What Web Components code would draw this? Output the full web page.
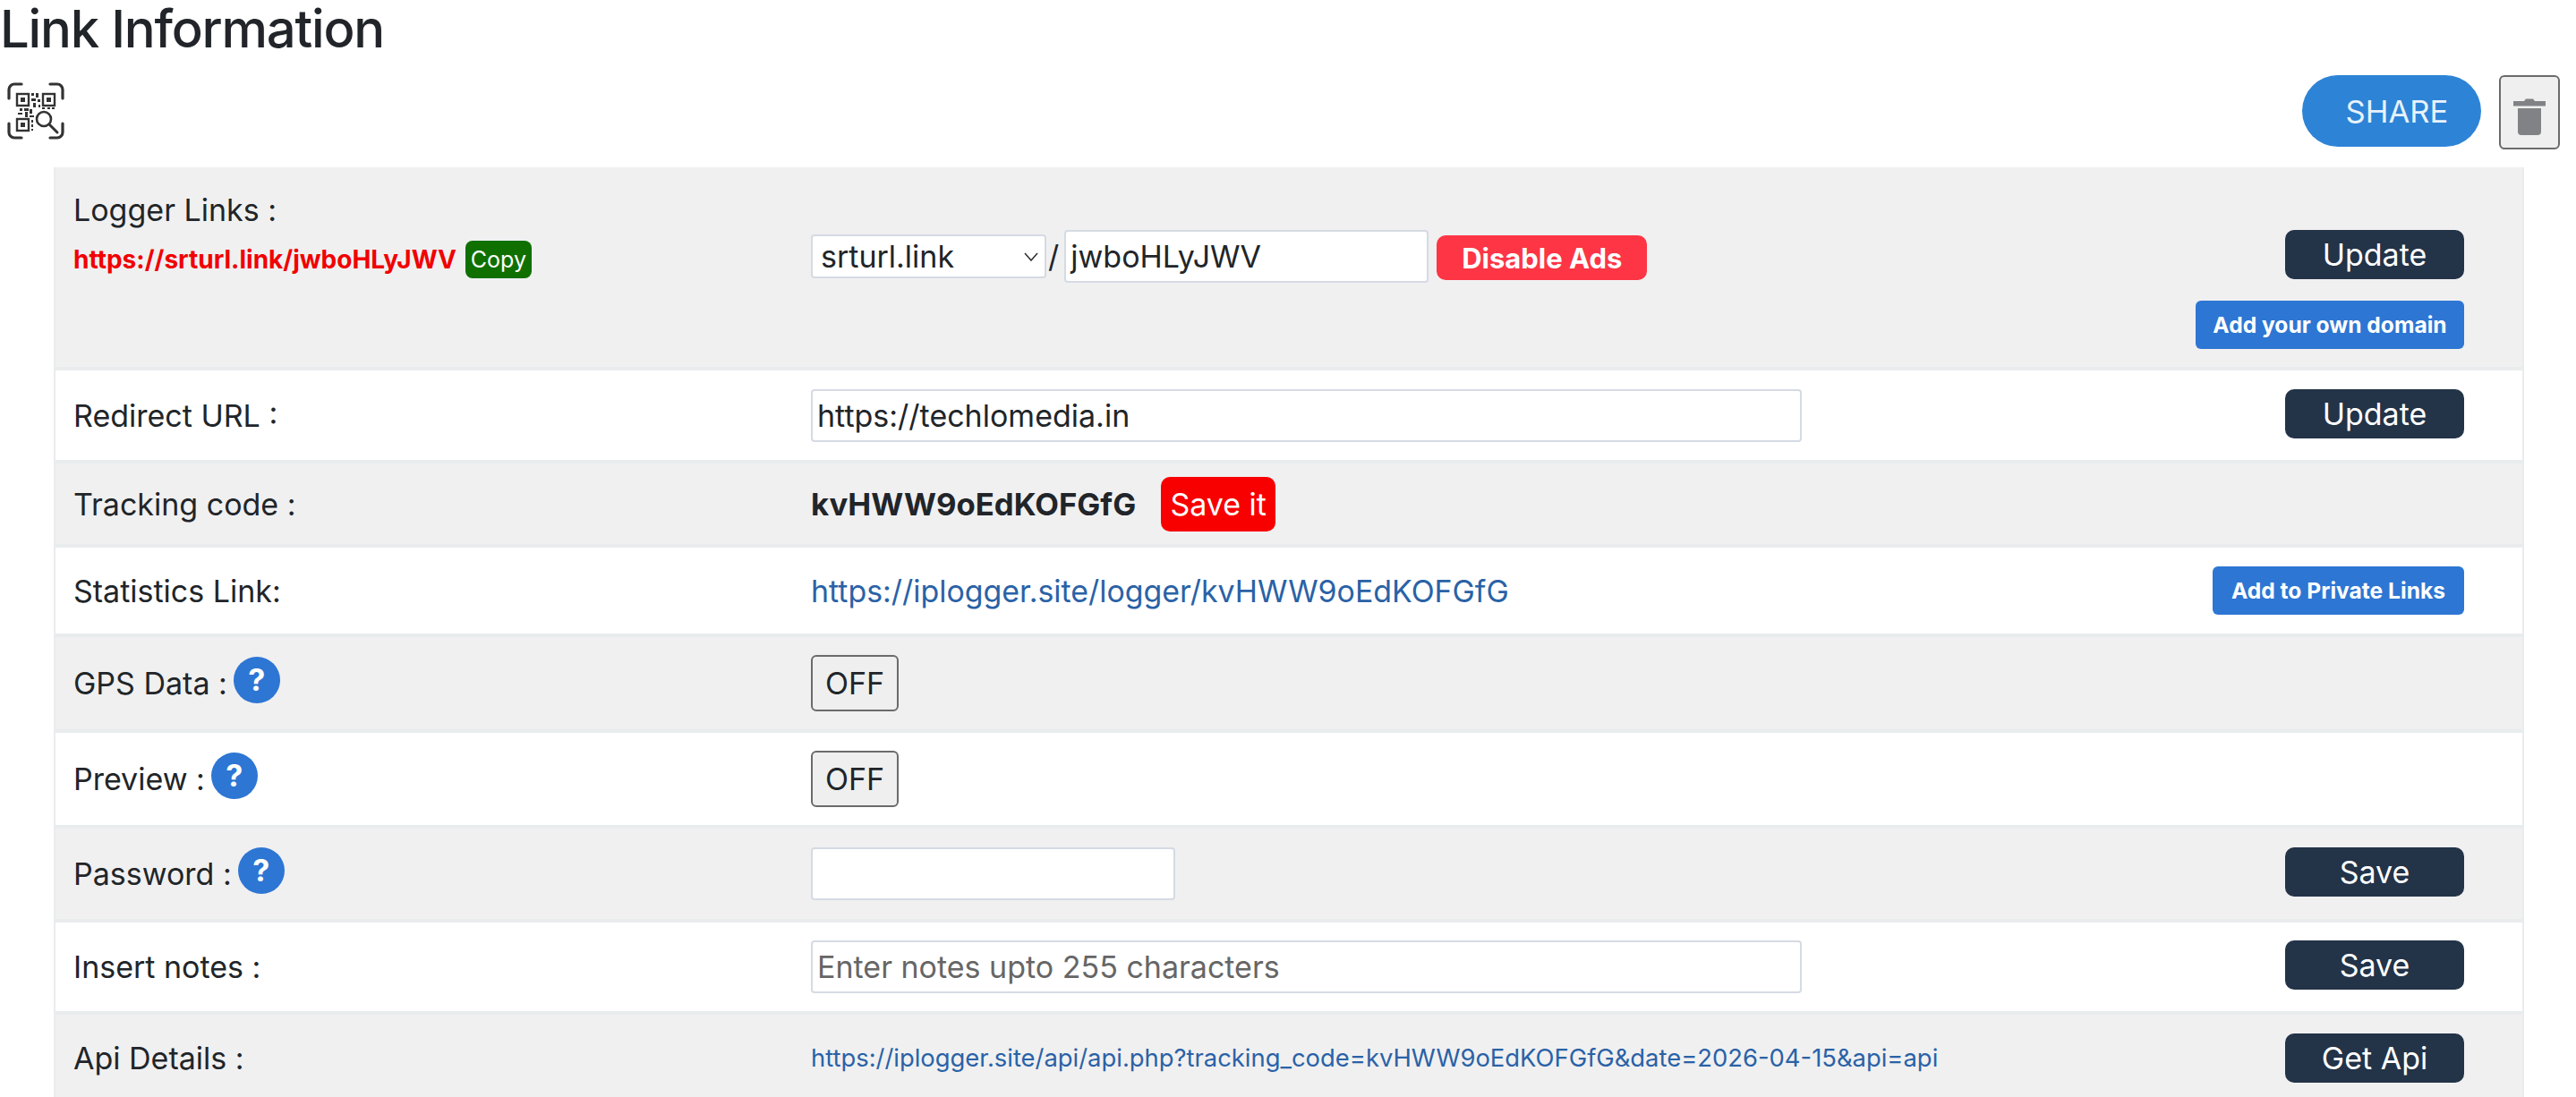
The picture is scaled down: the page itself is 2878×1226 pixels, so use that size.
<!DOCTYPE html>
<html>
<head>
<meta charset="utf-8">
<title>Link Information</title>
<style>
    html, body { margin: 0; height: 100%; overflow: hidden; background: #fff; }
    body { font-family: Inter, "Liberation Sans", sans-serif; color: #212529; }
</style>
</head>
<body>
<link-info></link-info>

<script>
// simple button, colour comes from the variant attribute
class UiBtn extends HTMLElement {
    constructor() {
        super();
        this.attachShadow({ mode: 'open' }).innerHTML = `
<style>
    :host {
        display: inline-flex;
        align-items: center;
        justify-content: center;
        box-sizing: border-box;
        width: 200px;
        height: 55px;
        border-radius: 10px;
        background: #233348;
        color: #fff;
        font-size: 34px;
        white-space: nowrap;
    }
    :host([variant="blue"]) {
        width: 300px;
        height: 54px;
        border-radius: 6px;
        background: #2d76d3;
        font-size: 24.6px;
        font-weight: 700;
    }
    :host([variant="ads"]) {
        width: 235px;
        height: 50px;
        margin-top: 3px;
        background: #fd3545;
        font-size: 31px;
        font-weight: 700;
    }
    :host([variant="save-it"]) {
        width: 128px;
        height: 61px;
        background: #f80000;
    }
    :host([variant="copy"]) {
        width: 74px;
        height: 42px;
        border-radius: 8px;
        background: #0f7000;
        font-size: 25px;
    }
    :host([variant="share"]) {
        width: 200px;
        height: 80px;
        padding-left: 12px;
        border-radius: 40px;
        background: #2d84d6;
        font-size: 34.6px;
        color: #e8f2fb;
    }
    :host([variant="off"]) {
        width: 98px;
        height: 63px;
        border: 2px solid #6b6b6b;
        border-radius: 6px;
        background: #efefef;
        color: #212529;
    }
</style>
<slot></slot>`;
    }
}
customElements.define('ui-btn', UiBtn);

class TrashBtn extends HTMLElement {
    constructor() {
        super();
        this.attachShadow({ mode: 'open' }).innerHTML = `
<style>
    :host {
        display: flex;
        align-items: center;
        justify-content: center;
        box-sizing: border-box;
        width: 68px;
        height: 83px;
        border: 2px solid #6b6b6b;
        border-radius: 6px;
        background: #efefef;
    }
    svg { display: block; margin-top: 10px; }
</style>
<svg width="36" height="42" viewBox="0 0 36 42" fill="#808285">
    <path d="M12 3 L14 0.5 H22 L24 3 H36 V8.5 H0 V3 Z"/>
    <path d="M5 11 H31 V37 a4 4 0 0 1 -4 4 H9 a4 4 0 0 1 -4 -4 Z"/>
</svg>`;
    }
}
customElements.define('trash-btn', TrashBtn);

// qr code with a magnifier and scan corners
class QrIcon extends HTMLElement {
    constructor() {
        super();
        this.attachShadow({ mode: 'open' }).innerHTML = `
<style>
    :host { display: block; width: 64px; height: 64px; }
    svg { display: block; filter: blur(.5px); }
</style>
<svg width="64" height="64" viewBox="0 0 64 64">
    <g fill="none" stroke="#333" stroke-width="3.2" stroke-linecap="round">
        <path d="M2 18 V8 a6 6 0 0 1 6 -6 H16"/>
        <path d="M48 2 H56 a6 6 0 0 1 6 6 V18"/>
        <path d="M2 46 V56 a6 6 0 0 0 6 6 H16"/>
        <path d="M48 62 H56 a6 6 0 0 0 6 -6 V46"/>
        <rect x="11" y="13" width="13" height="13" stroke-width="2.4"/>
        <rect x="40" y="13" width="13" height="13" stroke-width="2.4"/>
        <rect x="11" y="41" width="13" height="13" stroke-width="2.4"/>
        <circle cx="41" cy="41" r="8" stroke-width="2.6"/>
        <path d="M47 47 L56 56" stroke-width="3"/>
    </g>
    <g fill="#333">
        <rect x="15" y="17" width="5" height="5"/>
        <rect x="44" y="17" width="5" height="5"/>
        <rect x="15" y="45" width="5" height="5"/>
        <path d="M27 12h3v3h-3zM32 12h3v5h-3zM27 18h5v3h-5zM34 19h3v3h-3zM29 23h3v5h-3zM35 25h2v3h-2zM14 29h3v3h-3zM19 29h5v3h-5zM12 34h5v2h-5zM20 33h3v6h-3zM25 30h3v5h-3zM25 37h5v2h-5zM27 42h2v3h-2zM27 47h2v3h-2zM27 52h2v2h-2zM39 28h3v2h-3zM45 28h3v2h-3zM50 28h3v2h-3z"/>
    </g>
</svg>`;
    }
}
customElements.define('qr-icon', QrIcon);

class HelpBadge extends HTMLElement {
    constructor() {
        super();
        this.attachShadow({ mode: 'open' }).innerHTML = `
<style>
    :host {
        display: inline-flex;
        align-items: center;
        justify-content: center;
        width: 52px;
        height: 52px;
        margin-top: -8px;
        border-radius: 50%;
        background: #2d76d3;
        color: #fff;
        font-size: 34px;
        font-weight: 700;
    }
</style>?`;
    }
}
customElements.define('help-badge', HelpBadge);

// looks like an input box, the text stays in the slot
class TextField extends HTMLElement {
    constructor() {
        super();
        this.attachShadow({ mode: 'open' }).innerHTML = `
<style>
    :host {
        display: flex;
        align-items: center;
        box-sizing: border-box;
        height: 59px;
        padding: 0 5px;
        border: 2px solid #d5dae3;
        border-radius: 4px;
        background: #fff;
        font-size: 34px;
        white-space: nowrap;
    }
    :host([placeholder]) { color: #666; }
</style>
<slot></slot>`;
    }
}
customElements.define('text-field', TextField);

class DomainSelect extends HTMLElement {
    constructor() {
        super();
        this.attachShadow({ mode: 'open' }).innerHTML = `
<style>
    :host {
        display: flex;
        align-items: center;
        justify-content: space-between;
        box-sizing: border-box;
        width: 263px;
        height: 49px;
        padding: 0 7px 0 9px;
        border: 2px solid #d5dae3;
        border-radius: 4px;
        background: #fff;
        font-size: 34px;
    }
</style>
<slot></slot>
<svg width="16" height="10" viewBox="0 0 16 10" fill="none" stroke="#333" stroke-width="1.6"><path d="M1 1 L8 9 L15 1"/></svg>`;
    }
}
customElements.define('domain-select', DomainSelect);

// one table row: label, value and an action on the right
class InfoRow extends HTMLElement {
    constructor() {
        super();
        this.attachShadow({ mode: 'open' }).innerHTML = `
<style>
    :host {
        display: grid;
        grid-template-columns: 824px 1fr auto;
        align-items: center;
        box-sizing: border-box;
        padding: 0 65px 0 20px;
        border: solid #e9eced;
        border-width: 0 2px 4px;
        background: #fff;
        font-size: 34px;
    }
    :host([shaded]) { background: #f0f0f1; }
    .label, .value { display: flex; align-items: center; }
    .label { gap: 7px; }
    .value { min-width: 0; }
    .action { display: flex; flex-direction: column; align-items: flex-end; gap: 24px; }
</style>
<div class="label" part="label"><slot name="label"></slot></div>
<div class="value"><slot name="value"></slot></div>
<div class="action"><slot name="action"></slot></div>`;
    }
}
customElements.define('info-row', InfoRow);

const pageCode = `
<style>
    :host { display: block; }
    h1 {
        margin: 0;
        height: 84px;
        font-size: 58px;
        line-height: 64px;
        font-weight: 500;
        letter-spacing: -1.2px;
    }
    .tools {
        display: flex;
        align-items: flex-start;
        height: 103px;
        padding: 0 18px 0 8px;
    }
    .tools qr-icon { margin-top: 8px; margin-right: auto; }
    .tools ui-btn { margin-right: 20px; }
    .table { margin: 0 58px 0 60px; }
    a { color: #2a62a6; font-size: 33.9px; text-decoration: none; }
    .flexrow { display: flex; align-items: center; }
    .logger-label p { margin: 0; }
    .logger-url { color: #f00000; font-size: 28px; font-weight: 700; }
    .code { font-size: 34.7px; font-weight: 700; margin-right: 28px; }
    a.api { font-size: 27.4px; }
    .slash { margin: 0 6px 0 2px; }
    .up { margin-top: -4px; }
</style>
<h1>Link Information</h1>
<div class="tools">
    <qr-icon></qr-icon>
    <ui-btn variant="share">SHARE</ui-btn>
    <trash-btn></trash-btn>
</div>
<div class="table">
    <info-row shaded style="height:227px; align-items:start; padding-top:70px">
        <div slot="label" class="logger-label" style="margin-top:-46px">
            <p style="line-height:48px">Logger Links :</p>
            <div class="flexrow" style="gap:10px; margin-top:10px">
                <span class="logger-url">https://srturl.link/jwboHLyJWV</span>
                <ui-btn variant="copy">Copy</ui-btn>
            </div>
        </div>
        <div slot="value" class="flexrow">
            <domain-select>srturl.link</domain-select>
            <span class="slash">/</span>
            <text-field style="width:407px; margin-right:9px">jwboHLyJWV</text-field>
            <ui-btn variant="ads">Disable Ads</ui-btn>
        </div>
        <ui-btn slot="action">Update</ui-btn>
        <ui-btn slot="action" variant="blue">Add your own domain</ui-btn>
    </info-row>
    <info-row style="height:104px">
        <span slot="label">Redirect URL :</span>
        <text-field slot="value" style="width:1107px">https://techlomedia.in</text-field>
        <ui-btn slot="action" class="up">Update</ui-btn>
    </info-row>
    <info-row shaded style="height:94px">
        <span slot="label">Tracking code :</span>
        <div slot="value" class="flexrow">
            <span class="code">kvHWW9oEdKOFGfG</span>
            <ui-btn variant="save-it">Save it</ui-btn>
        </div>
    </info-row>
    <info-row style="height:100px">
        <span slot="label">Statistics Link:</span>
        <a slot="value" href="#">https://iplogger.site/logger/kvHWW9oEdKOFGfG</a>
        <ui-btn slot="action" variant="blue" style="width:281px">Add to Private Links</ui-btn>
    </info-row>
    <info-row shaded style="height:107px">
        <span slot="label">GPS Data :</span>
        <help-badge slot="label"></help-badge>
        <ui-btn slot="value" variant="off">OFF</ui-btn>
    </info-row>
    <info-row style="height:107px">
        <span slot="label">Preview :</span>
        <help-badge slot="label"></help-badge>
        <ui-btn slot="value" variant="off">OFF</ui-btn>
    </info-row>
    <info-row shaded style="height:105px">
        <span slot="label">Password :</span>
        <help-badge slot="label"></help-badge>
        <text-field slot="value" style="width:407px"></text-field>
        <ui-btn slot="action" class="up">Save</ui-btn>
    </info-row>
    <info-row style="height:103px">
        <span slot="label">Insert notes :</span>
        <text-field slot="value" placeholder style="width:1107px">Enter notes upto 255 characters</text-field>
        <ui-btn slot="action" class="up">Save</ui-btn>
    </info-row>
    <info-row shaded style="height:100px">
        <span slot="label">Api Details :</span>
        <a slot="value" class="api" href="#">https://iplogger.site/api/api.php?tracking_code=kvHWW9oEdKOFGfG&amp;date=2026-04-15&amp;api=api</a>
        <ui-btn slot="action">Get Api</ui-btn>
    </info-row>
</div>`;

class LinkInfo extends HTMLElement {
    constructor() {
        super();
        this.attachShadow({ mode: 'open' }).innerHTML = pageCode;
    }
}
customElements.define('link-info', LinkInfo);
</script>
</body>
</html>
